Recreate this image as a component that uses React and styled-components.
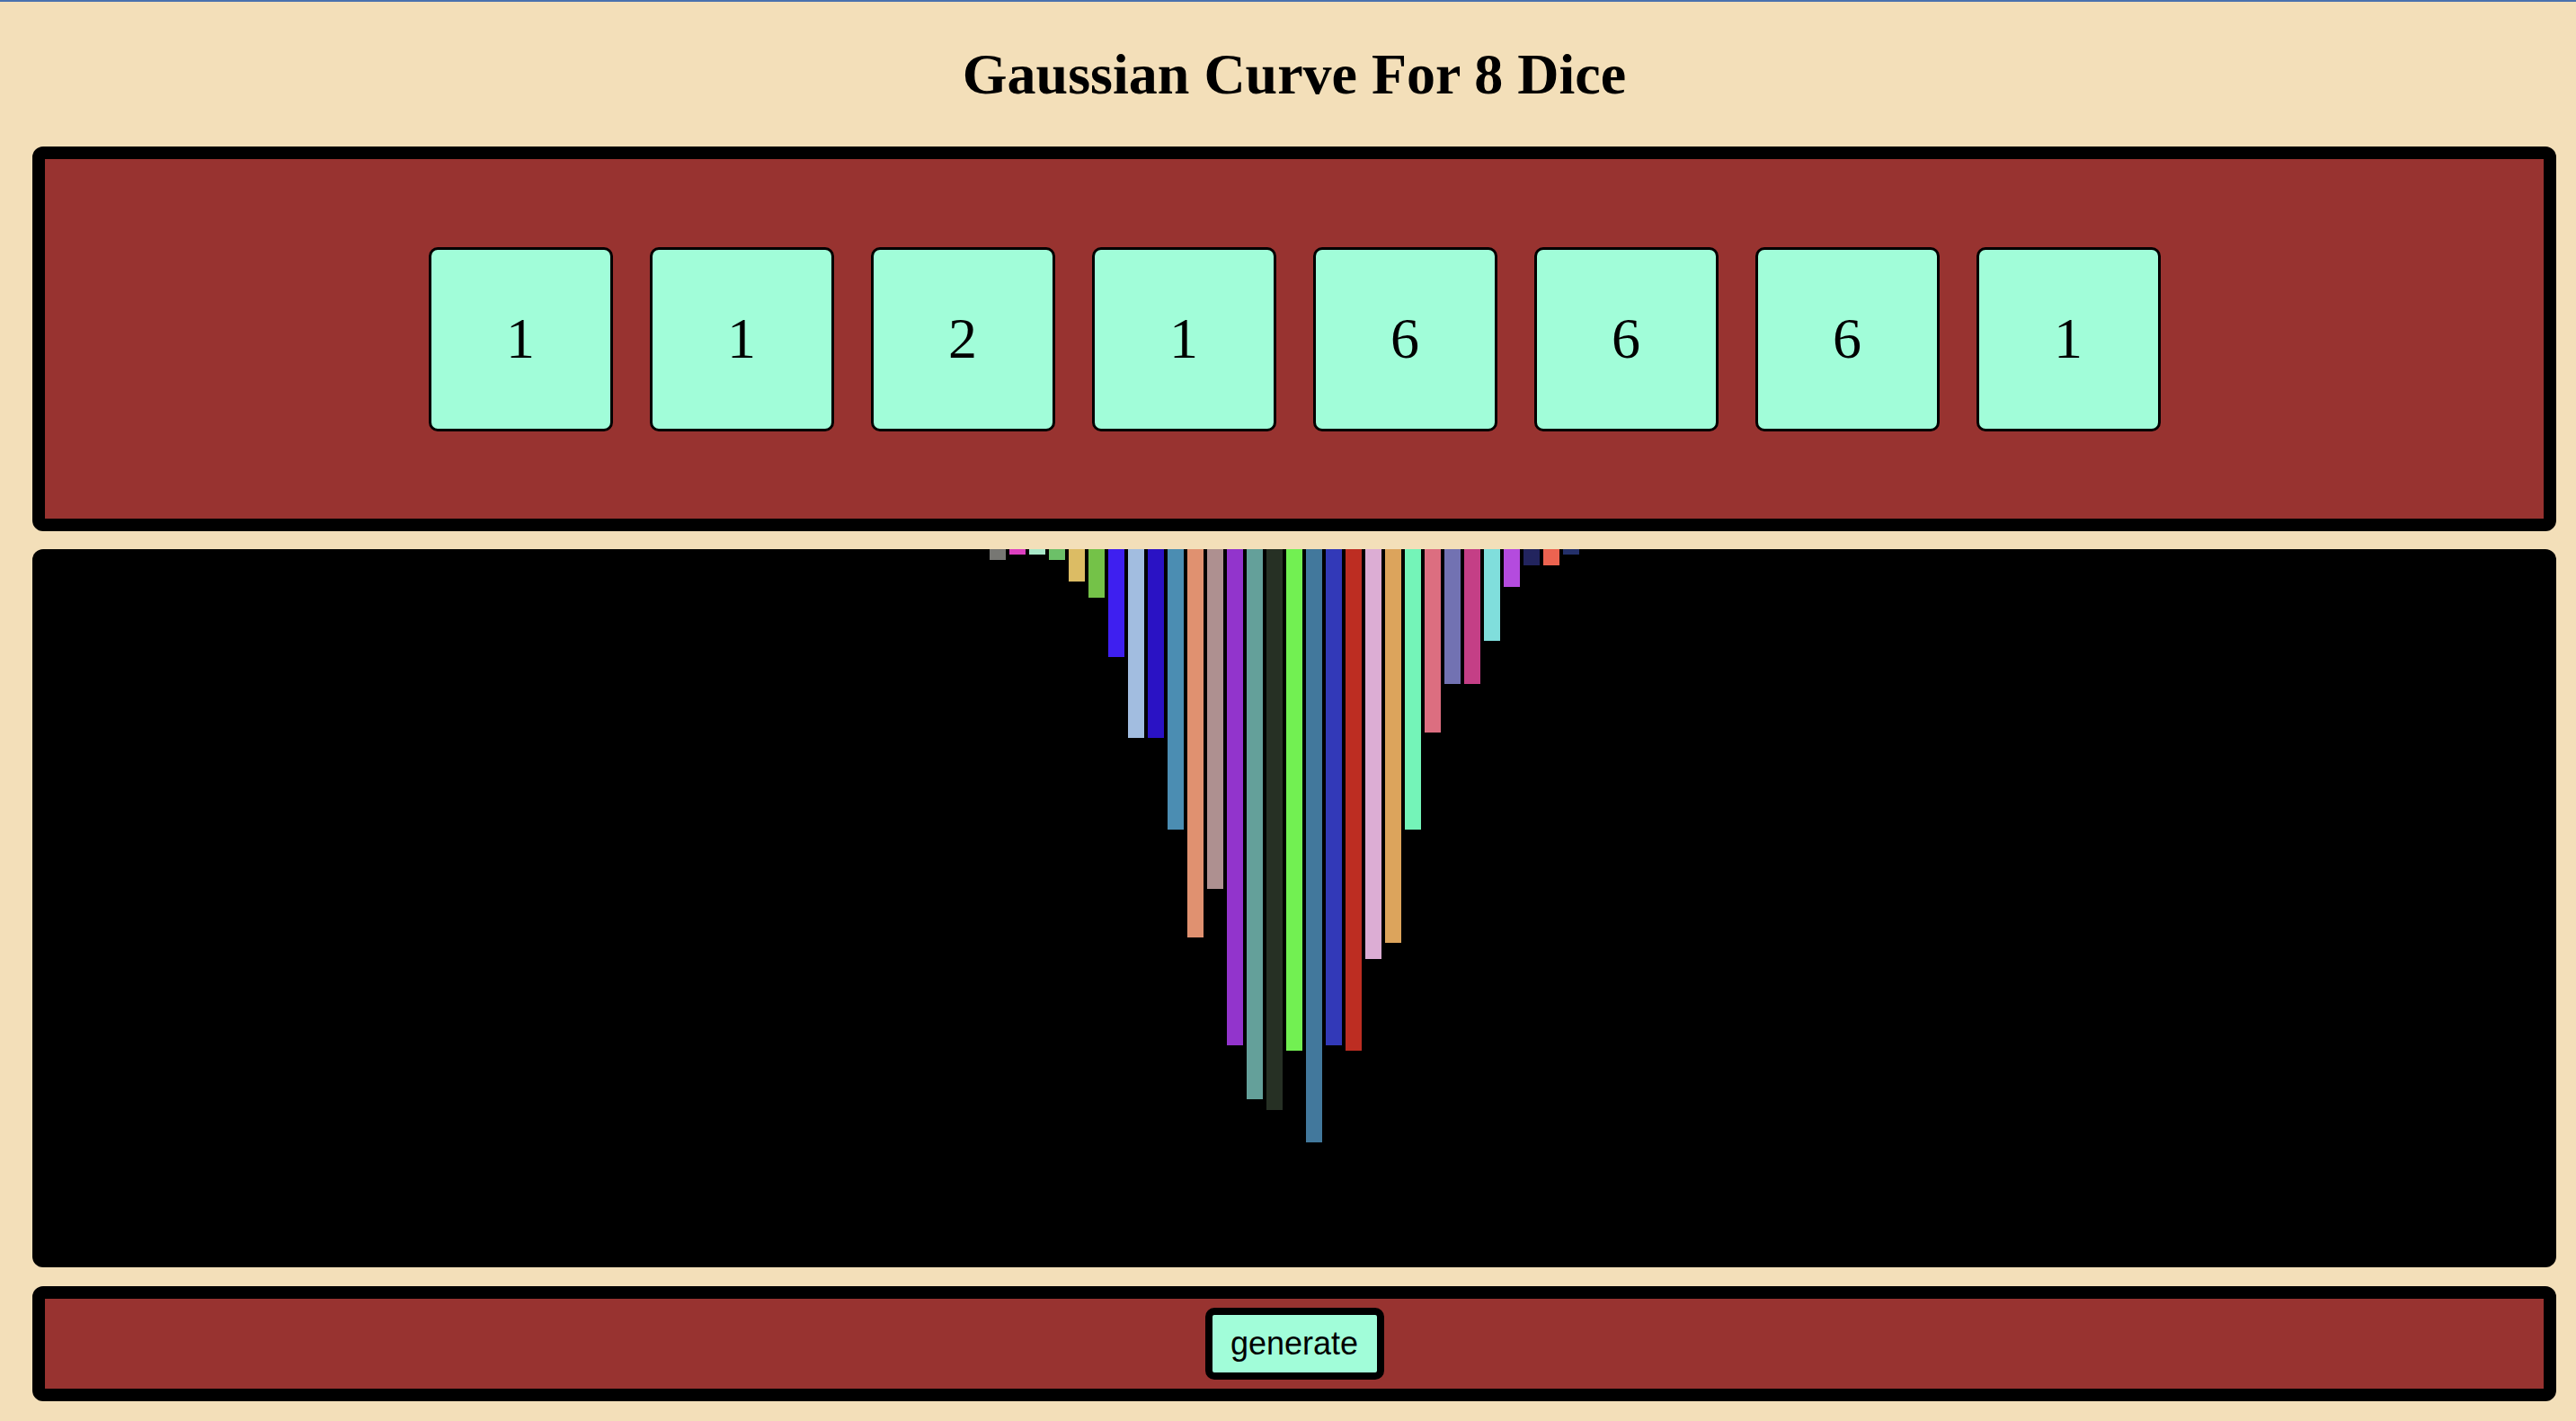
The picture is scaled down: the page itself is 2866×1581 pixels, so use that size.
import React from "react";
import styled, { createGlobalStyle } from "styled-components";

const GlobalStyle = createGlobalStyle`
  html, body {
    margin: 0;
    padding: 0;
    background-color: #f3dfb9;
  }
  body {
    font-family: "Liberation Serif", "Times New Roman", serif;
  }
`;

const Page = styled.div`
  min-height: 1581px;
  box-sizing: border-box;
  padding: 0 22px 0 36px;
  border-top: 2px solid #4a71ae;
  background-color: #f3dfb9;
`;

const Title = styled.h1`
  margin: 45px 0 45px;
  font-family: "Liberation Serif", "Times New Roman", serif;
  font-size: 64px;
  line-height: 71px;
  font-weight: bold;
  text-align: center;
  color: #000;
`;

const Panel = styled.div`
  box-sizing: border-box;
  height: ${(props) => props.height}px;
  border: 14px solid #000;
  border-radius: 12px;
  background-color: #983330;
  display: flex;
  justify-content: center;
  align-items: center;
  gap: 41px;
`;

const Die = styled.div`
  box-sizing: border-box;
  width: 205px;
  height: 205px;
  border: 3px solid #000;
  border-radius: 10px;
  background-color: #a1fdd9;
  display: flex;
  justify-content: center;
  align-items: center;
  font-size: 64px;
  color: #000;
`;

const Chart = styled.div`
  height: 799px;
  margin: 20px 0 21px;
  border-radius: 12px;
  background-color: #000;
  display: flex;
  justify-content: center;
  align-items: flex-start;
  gap: 4px;
  overflow: hidden;
`;

const Bar = styled.div`
  width: 18px;
  flex: 0 0 18px;
  background-color: ${(props) => props.color};
`;

const Button = styled.button`
  box-sizing: border-box;
  width: 199px;
  height: 80px;
  padding: 0;
  border: 8px solid #000;
  border-radius: 10px;
  background-color: #a1fdd9;
  font-family: "Liberation Sans", Arial, sans-serif;
  font-size: 36px;
  color: #000;
  cursor: pointer;
`;

const dice = [1, 1, 2, 1, 6, 6, 6, 1];

const bars = [
  [2, "#777773"],
  [1, "#dc3fbf"],
  [1, "#a8e8c8"],
  [2, "#6cc068"],
  [6, "#dcbc64"],
  [9, "#74c248"],
  [20, "#3e1ff0"],
  [35, "#a2bde0"],
  [35, "#2a12c4"],
  [52, "#4b8db2"],
  [72, "#e09170"],
  [63, "#ae9090"],
  [92, "#9234cc"],
  [102, "#64a09a"],
  [104, "#263024"],
  [93, "#72f052"],
  [110, "#42789c"],
  [92, "#3239b8"],
  [93, "#bd2d22"],
  [76, "#dcadd4"],
  [73, "#dca45c"],
  [52, "#74f4b8"],
  [34, "#dc6e80"],
  [25, "#7272b2"],
  [25, "#c43f86"],
  [17, "#80dedc"],
  [7, "#b44bde"],
  [3, "#22245e"],
  [3, "#ec6350"],
  [1, "#24306a"],
  [0, "#000"],
];

const App = () => {
  return (
    <Page>
      <GlobalStyle />
      <Title>Gaussian Curve For 8 Dice</Title>
      <Panel height={428}>
        {dice.map((value, i) => (
          <Die key={i}>{value}</Die>
        ))}
      </Panel>
      <Chart>
        {bars.map(([count, color], i) => (
          <Bar key={i} color={color} style={{ height: count * 6 }} />
        ))}
      </Chart>
      <Panel height={128}>
        <Button>generate</Button>
      </Panel>
    </Page>
  );
};

export default App;
